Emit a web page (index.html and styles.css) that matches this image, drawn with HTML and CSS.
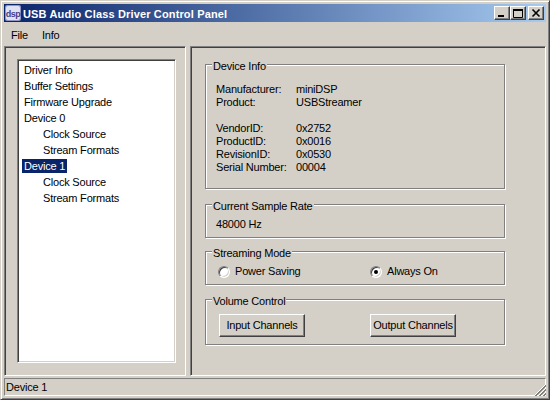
FILE: index.html
```html
<!DOCTYPE html>
<html lang="en">
<head>
  <meta charset="UTF-8">
  <title>USB Audio Class Driver Control Panel</title>
  <link rel="stylesheet" href="styles.css">
</head>
<body>
  <div class="window">
    <div class="titlebar">
      <svg class="app-icon" width="16" height="16" viewBox="0 0 16 16">
        <rect x="0" y="0" width="16" height="16" rx="2" fill="#8f96c4"/>
        <rect x="1" y="1" width="14" height="14" rx="2" fill="#dfe2f2"/>
        <text x="8" y="12" text-anchor="middle" font-family="Liberation Sans, sans-serif" font-size="9" font-weight="bold" letter-spacing="-0.5" fill="#4a3d86">dsp</text>
      </svg>
      <span class="title">USB Audio Class Driver Control Panel</span>
      <div class="caption-buttons">
        <span class="cap-btn">
          <svg width="14" height="12" viewBox="0 0 14 12"><rect x="3" y="8" width="6" height="2" fill="#000"/></svg>
        </span>
        <span class="cap-btn">
          <svg width="14" height="12" viewBox="0 0 14 12"><path d="M2.5 2.5h9v8h-9z" fill="none" stroke="#000"/><rect x="2" y="2" width="10" height="2" fill="#000"/></svg>
        </span>
        <span class="cap-btn close">
          <svg width="14" height="12" viewBox="0 0 14 12"><path d="M3.5 2.5l7 7M10.5 2.5l-7 7" stroke="#000" stroke-width="1.6"/></svg>
        </span>
      </div>
    </div>

    <div class="menubar">
      <span class="menu-item">File</span>
      <span class="menu-item">Info</span>
    </div>

    <div class="main">
      <div class="panel left-panel">
        <ul class="tree">
          <li>Driver Info</li>
          <li>Buffer Settings</li>
          <li>Firmware Upgrade</li>
          <li>Device 0</li>
          <li class="child">Clock Source</li>
          <li class="child">Stream Formats</li>
          <li class="selected">Device 1</li>
          <li class="child">Clock Source</li>
          <li class="child">Stream Formats</li>
        </ul>
      </div>

      <div class="panel right-panel">
        <div class="group info-group">
          <div class="group-title">Device Info</div>
          <div class="info-row"><span class="info-label">Manufacturer:</span><span>miniDSP</span></div>
          <div class="info-row"><span class="info-label">Product:</span><span>USBStreamer</span></div>
          <div class="info-gap"></div>
          <div class="info-row"><span class="info-label">VendorID:</span><span>0x2752</span></div>
          <div class="info-row"><span class="info-label">ProductID:</span><span>0x0016</span></div>
          <div class="info-row"><span class="info-label">RevisionID:</span><span>0x0530</span></div>
          <div class="info-row"><span class="info-label">Serial Number:</span><span>00004</span></div>
        </div>

        <div class="group rate-group">
          <div class="group-title">Current Sample Rate</div>
          <div class="rate">48000 Hz</div>
        </div>

        <div class="group mode-group">
          <div class="group-title">Streaming Mode</div>
          <div class="radio-row">
            <label class="radio-label"><span class="radio"></span>Power Saving</label>
            <label class="radio-label"><span class="radio checked"></span>Always On</label>
          </div>
        </div>

        <div class="group volume-group">
          <div class="group-title">Volume Control</div>
          <div class="button-row">
            <button class="btn">Input Channels</button>
            <button class="btn">Output Channels</button>
          </div>
        </div>
      </div>
    </div>

    <div class="statusbar">
      <div class="status-field">Device 1</div>
      <svg class="grip" width="12" height="12" viewBox="0 0 12 12">
        <path d="M11 1L1 11M11 5L5 11M11 9L9 11" stroke="#fff"/>
        <path d="M12 1L1 12M12 2L2 12M12 5L5 12M12 6L6 12M12 9L9 12M12 10L10 12" stroke="#808080"/>
      </svg>
    </div>
  </div>
</body>
</html>
```

FILE: styles.css
```css
* {
  box-sizing: border-box;
}
body {
  margin: 0;
  font-family: "Liberation Sans", Arial, sans-serif;
  font-size: 11px;
  letter-spacing: -0.2px;
  color: #000;
}
.window {
  width: 550px;
  height: 400px;
  background: #d4d0c8;
  border: 1px solid;
  border-color: #d4d0c8 #404040 #404040 #d4d0c8;
  box-shadow: inset 1px 1px #fff, inset -1px -1px #808080;
  padding: 3px;
  display: flex;
  flex-direction: column;
}

/* title bar */
.titlebar {
  height: 18px;
  display: flex;
  align-items: center;
  padding: 0 2px 0 1px;
  background: linear-gradient(to right, #0a246a, #a6caf0);
  color: #fff;
}
.app-icon {
  flex: none;
}
.title {
  margin-left: 2px;
  font-weight: bold;
  letter-spacing: 0.15px;
  line-height: 18px;
  padding-top: 1px;
}
.caption-buttons {
  margin-left: auto;
  display: flex;
}
.cap-btn {
  width: 16px;
  height: 14px;
  background: #d4d0c8;
  border: 1px solid;
  border-color: #fff #404040 #404040 #fff;
  box-shadow: inset -1px -1px #808080;
  display: flex;
}
.cap-btn.close {
  margin-left: 2px;
}

/* menu */
.menubar {
  height: 24px;
  padding-top: 7px;
  display: flex;
  line-height: 13px;
}
.menu-item {
  padding: 0 7px;
}

/* main area */
.main {
  height: 330px;
  display: flex;
  gap: 4px;
}
.panel {
  border: 1px solid;
  border-color: #808080 #fff #fff #808080;
  box-shadow: inset 1px 1px #404040;
}
.left-panel {
  width: 182px;
  padding: 12px 9px 12px 12px;
  display: flex;
}
.tree {
  flex: 1;
  margin: 0;
  padding: 3px 0 0 4px;
  list-style: none;
  background: #fff;
  border: 1px solid;
  border-color: #808080 #fff #fff #808080;
  box-shadow: inset 1px 1px #404040, inset -1px -1px #d4d0c8;
}
.tree li {
  width: fit-content;
  padding: 0 2px;
  line-height: 14px;
  margin-bottom: 2px;
}
.tree li.child {
  margin-left: 19px;
}
.tree li.selected {
  background: #0a246a;
  color: #fff;
}

.right-panel {
  flex: 1;
  padding: 17px 0 0 14px;
}
.group {
  width: 300px;
  border: 1px solid #808080;
  box-shadow: inset 1px 1px #fff, 1px 1px #fff;
  padding: 0 10px 7px 10px;
  margin-bottom: 14px;
  line-height: 13px;
}
.group-title {
  width: fit-content;
  margin: -5px 0 0 -4px;
  padding: 0 1px;
  background: #d4d0c8;
}
.info-group {
  padding-bottom: 14px;
  margin-bottom: 15px;
}
.info-group .group-title {
  margin-bottom: 10px;
}
.info-row {
  display: flex;
}
.info-label {
  width: 80px;
}
.info-gap {
  height: 13px;
}

.rate {
  margin-top: 5px;
}
.rate-group {
  padding-bottom: 6px;
  margin-bottom: 13px;
}

.mode-group {
  padding-bottom: 6px;
}
.radio-row {
  margin: 5px 0 0 2px;
  display: grid;
  grid-template-columns: 152px auto;
}
.radio-label {
  display: flex;
  align-items: center;
  gap: 5px;
}
.radio {
  position: relative;
  flex: none;
  width: 12px;
  height: 12px;
  border-radius: 50%;
  border: 1px solid;
  border-color: #808080 #fff #fff #808080;
  background: #fff;
  box-shadow: inset 1px 1px #404040, inset -1px -1px #d4d0c8;
}
.radio.checked::after {
  content: "";
  position: absolute;
  left: 3px;
  top: 3px;
  width: 4px;
  height: 4px;
  border-radius: 50%;
  background: #000;
}

.button-row {
  margin: 6px 0 0 3px;
  display: grid;
  grid-template-columns: 151px auto;
}
.btn {
  width: 86px;
  height: 23px;
  padding: 0;
  font-family: inherit;
  font-size: 11px;
  letter-spacing: inherit;
  line-height: 21px;
  color: #000;
  background: #d4d0c8;
  border: 1px solid;
  border-color: #fff #404040 #404040 #fff;
  box-shadow: inset -1px -1px #808080;
}

/* status bar */
.statusbar {
  position: relative;
  height: 20px;
  padding-top: 2px;
}
.status-field {
  height: 18px;
  padding: 1px 0 0 1px;
  line-height: 15px;
  border: 1px solid;
  border-color: #808080 #fff #fff #808080;
}
.grip {
  position: absolute;
  right: 0;
  bottom: 0;
}
```
